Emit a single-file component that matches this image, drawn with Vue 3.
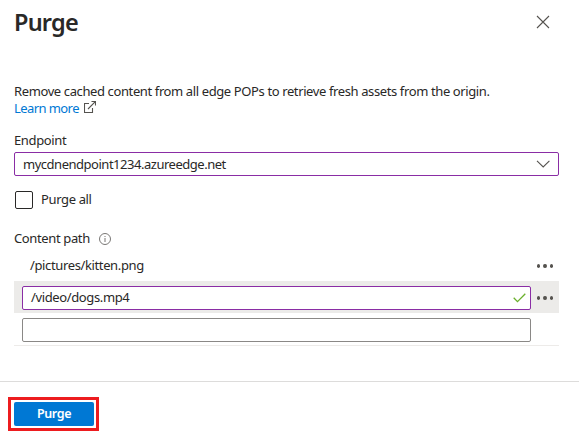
<script setup>
import { ref } from 'vue'

const endpoint = ref('mycdnendpoint1234.azureedge.net')
const editedPath = ref('/video/dogs.mp4')
</script>

<template>
  <main class="panel">
    <header class="header">
      <h1 class="title">Purge</h1>
      <svg class="close" width="14" height="14" viewBox="0 0 14 14"><path d="M1 1 13 13M13 1 1 13" /></svg>
    </header>

    <section class="body">
      <p class="desc">Remove cached content from all edge POPs to retrieve fresh assets from the origin.</p>
      <a class="link">
        <span class="link-text">Learn more</span>
        <svg class="external" width="12" height="12" viewBox="0 0 12 12"><path d="M5 2.5H.5v9h8V7M4 8 11.3.7M7.5.5h4v4" /></svg>
      </a>

      <div class="label"><span class="t-endpoint">Endpoint</span></div>
      <div class="select">
        <span class="t-value">{{ endpoint }}</span>
        <svg class="chevron" width="14" height="8" viewBox="0 0 14 8"><path d="M1 .9 7.2 7 13.4.9" /></svg>
      </div>

      <div class="check-row">
        <span class="checkbox"></span>
        <span class="t-all">Purge all</span>
      </div>

      <div class="path-label">
        <span class="t-path">Content path</span>
        <svg class="info" width="12" height="12" viewBox="0 0 12 12">
          <circle cx="6" cy="6" r="5.5" /><path d="M6 5v4M6 3v1" />
        </svg>
      </div>

      <div class="rows">
        <div class="row">
          <div class="plain"><span class="t-kitten">/pictures/kitten.png</span></div>
          <span class="dots"><i></i><i></i><i></i></span>
        </div>
        <div class="row active">
          <div class="input valid">
            <span class="t-dogs">{{ editedPath }}</span>
            <svg class="tick" width="13" height="10" viewBox="0 0 13 10"><path d="M.7 4.8 4.5 8.6 12.3.8" /></svg>
          </div>
          <span class="dots"><i></i><i></i><i></i></span>
        </div>
        <div class="row last">
          <div class="input"></div>
        </div>
      </div>
    </section>

    <footer class="footer">
      <div class="highlight"><button class="primary">Purge</button></div>
    </footer>
  </main>
</template>

<style>
body {
  background: #fff;
}
</style>

<style scoped>
.panel {
  box-sizing: border-box;
  width: 579px;
  height: 442px;
  overflow: hidden;
  background: #fff;
  color: #292827;
  font-family: "Noto Sans", "Open Sans", sans-serif;
  font-size: 13px;
  line-height: 17px;
  white-space: nowrap;
}
svg {
  display: block;
  fill: none;
  stroke: #55534f;
  stroke-width: 1.1;
}
.header {
  display: flex;
  justify-content: space-between;
  align-items: flex-start;
  height: 83px;
  padding: 0 29px 0 14px;
}
.title {
  margin: 6px 0 0;
  font-size: 23.5px;
  line-height: 32px;
  font-weight: 600;
  letter-spacing: -0.8px;
}
.close {
  margin-top: 15px;
}
.body {
  padding: 0 20px 0 14px;
}
.desc {
  margin: 0;
  letter-spacing: -0.385px;
}
.link {
  display: flex;
  gap: 5px;
  color: #0078d4;
}
.external {
  margin-top: 1px;
}
.label {
  margin-top: 15px;
  height: 20px;
}
.select,
.input {
  box-sizing: border-box;
  display: flex;
  align-items: center;
  justify-content: space-between;
  height: 24px;
  border: 1px solid #8a8886;
  border-radius: 2px;
  background: #fff;
}
.select {
  padding: 0 8px;
  border-color: #8a2da5;
}
.check-row {
  display: flex;
  align-items: center;
  gap: 8px;
  margin-top: 15px;
  height: 18px;
  padding-left: 1px;
}
.t-all {
  padding-bottom: 2px;
}
.checkbox {
  box-sizing: border-box;
  width: 18px;
  height: 18px;
  border: 1px solid #292827;
  border-radius: 2px;
}
.path-label {
  display: flex;
  align-items: center;
  gap: 9px;
  height: 18px;
  margin-top: 21px;
}
.t-path {
  padding-bottom: 2px;
}
.info {
  stroke: #797775;
  stroke-width: 1;
}
.rows {
  margin-top: 1px;
}
.row {
  box-sizing: border-box;
  display: flex;
  align-items: center;
  height: 32px;
  padding: 2px 6px 0 8px;
  justify-content: space-between;
}
.active {
  background: #ecebe9;
}
.last {
  height: 33px;
  border-bottom: 1px solid #edebe9;
}
.plain {
  padding: 0 0 1px 8px;
}
.input {
  width: 509px;
  padding: 0 5px 0 8px;
}
.valid {
  padding-right: 4px;
  border-color: #8a2da5;
}
.tick {
  stroke: #6bb02c;
  stroke-width: 1.3;
}
.t-dogs {
  padding-bottom: 1px;
}
.dots {
  display: flex;
  gap: 3px;
}
.dots i {
  width: 3.5px;
  height: 4px;
  border-radius: 50%;
  background: #55534f;
}
.footer {
  margin-top: 35px;
  border-top: 1px solid #dddcdb;
  padding: 15px 0 0 8px;
}
.highlight {
  box-sizing: border-box;
  width: 91px;
  height: 34px;
  padding: 2px 3px;
  border: 3px solid #ed1c1f;
}
.primary {
  display: block;
  width: 80px;
  height: 24px;
  padding: 0;
  border: 0;
  border-radius: 2px;
  background: #0078d4;
  color: #fff;
  font: 600 12.5px/22px "Noto Sans", "Open Sans", sans-serif;
  letter-spacing: -0.4px;
}
.t-endpoint,
.t-all,
.t-path,
.t-kitten,
.t-dogs {
  letter-spacing: -0.37px;
}
.link-text {
  letter-spacing: -0.58px;
}
.t-value {
  letter-spacing: -0.48px;
}
</style>
